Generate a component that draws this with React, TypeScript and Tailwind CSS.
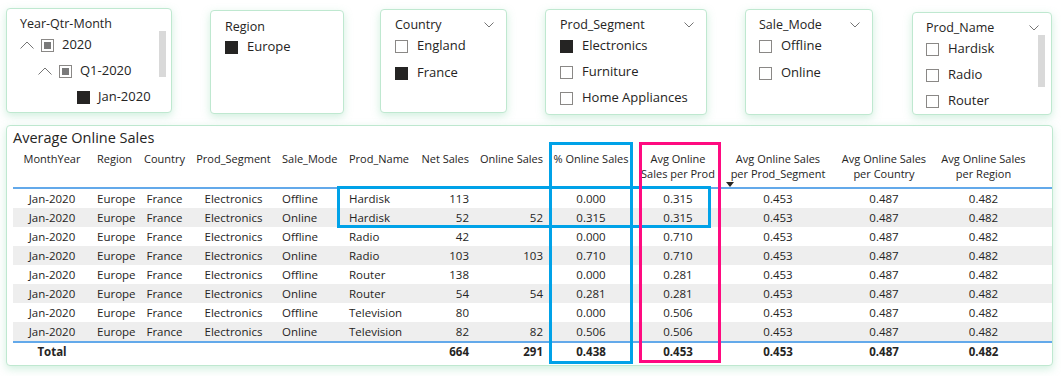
import type { ReactNode } from "react";

const font = { fontFamily: '"Segoe UI", "Open Sans", sans-serif' };

const Chevron = ({ up = false }: { up?: boolean }) =>
  up ? (
    <svg width="14" height="8" viewBox="0 0 14 8" className="shrink-0">
      <polyline points="0.5,7.5 7,1 13.5,7.5" fill="none" stroke="#757575" strokeWidth="1" />
    </svg>
  ) : (
    <svg width="10" height="6" viewBox="0 0 10 6" className="shrink-0">
      <polyline points="0.5,0.5 5,5 9.5,0.5" fill="none" stroke="#757575" strokeWidth="1" />
    </svg>
  );

const Box = ({ checked = false }: { checked?: boolean }) => (
  <span
    className={
      checked
        ? "block h-[13px] w-[13px] shrink-0 bg-[#252423]"
        : "block h-[13px] w-[13px] shrink-0 border border-[#8a8886] bg-white"
    }
  />
);

const Partial = () => (
  <span className="flex h-[13px] w-[13px] shrink-0 items-center justify-center border border-[#8a8886] bg-white">
    <span className="block h-[7px] w-[7px] bg-[#7a7a7a]" />
  </span>
);

type CardProps = {
  title: string;
  className: string;
  dropdown?: boolean;
  children: ReactNode;
};

const Slicer = ({ title, className, dropdown, children }: CardProps) => (
  <div
    className={
      "relative shrink-0 overflow-hidden rounded-[4px] border border-[#bfe8d0] bg-white shadow-[0_3px_8px_rgba(120,210,160,0.35)] " +
      className
    }
  >
    <div className="flex h-[14px] items-center justify-between pr-[12px]">
      <span className="text-[12.5px] font-medium text-[#252423]">{title}</span>
      {dropdown && <Chevron />}
    </div>
    {children}
  </div>
);

const Item = ({ label, checked }: { label: string; checked?: boolean }) => (
  <div className="flex h-[26px] items-center gap-[9px] text-[13px] text-[#252423]">
    <Box checked={checked} />
    <span>{label}</span>
  </div>
);

const Scroll = ({ className }: { className: string }) => (
  <span className={"absolute w-[7px] bg-[#d9d9d9] " + className} />
);

const rows = [
  ["Offline", "Hardisk", "113", "", "0.000", "0.315"],
  ["Online", "Hardisk", "52", "52", "0.315", "0.315"],
  ["Offline", "Radio", "42", "", "0.000", "0.710"],
  ["Online", "Radio", "103", "103", "0.710", "0.710"],
  ["Offline", "Router", "138", "", "0.000", "0.281"],
  ["Online", "Router", "54", "54", "0.281", "0.281"],
  ["Offline", "Television", "80", "", "0.000", "0.506"],
  ["Online", "Television", "82", "82", "0.506", "0.506"],
];

const grid =
  "grid grid-cols-[78px_48px_51px_87px_66px_71px_60px_74px_86px_88px_112px_100px_99px]";

export default function App() {
  return (
    <div className="relative h-[376px] w-[1061px] overflow-hidden bg-white" style={font}>
      {/* slicers */}
      <div className="flex h-[125px] items-start">
        <Slicer title="Year-Qtr-Month" className="ml-[6px] mt-[8px] h-[105px] w-[166px] pl-[13px] pt-[8px]">
          <div className="mt-[1px] flex flex-col text-[13px] text-[#252423]">
            <div className="flex h-[26px] items-center">
              <span className="w-[21px]"><Chevron up /></span>
              <Partial />
              <span className="ml-[8px]">2020</span>
            </div>
            <div className="flex h-[26px] items-center pl-[18px]">
              <span className="w-[21px]"><Chevron up /></span>
              <Partial />
              <span className="ml-[8px]">Q1-2020</span>
            </div>
            <div className="flex h-[26px] items-center pl-[57px]">
              <Box checked />
              <span className="ml-[8px]">Jan-2020</span>
            </div>
          </div>
          <Scroll className="left-[152px] top-[22px] h-[46px]" />
        </Slicer>

        <Slicer title="Region" className="ml-[38px] mt-[10px] h-[104px] w-[134px] pl-[14px] pt-[9px]">
          <div className="mt-0">
            <Item label="Europe" checked />
          </div>
        </Slicer>

        <Slicer title="Country" dropdown className="ml-[36px] mt-[9px] h-[104px] w-[127px] pl-[14px] pt-[8px]">
          <div className="mt-[1px] flex flex-col gap-[1px]">
            <Item label="England" />
            <Item label="France" checked />
          </div>
        </Slicer>

        <Slicer title="Prod_Segment" dropdown className="ml-[38px] mt-[9px] h-[106px] w-[162px] pl-[14px] pt-[8px]">
          <div className="mt-[1px] flex flex-col">
            <Item label="Electronics" checked />
            <Item label="Furniture" />
            <Item label="Home Appliances" />
          </div>
        </Slicer>

        <Slicer title="Sale_Mode" dropdown className="ml-[38px] mt-[9px] h-[106px] w-[128px] pl-[13px] pt-[8px]">
          <div className="mt-[1px] flex flex-col gap-[1px]">
            <Item label="Offline" />
            <Item label="Online" />
          </div>
        </Slicer>

        <Slicer title="Prod_Name" dropdown className="ml-[39px] mt-[12px] h-[103px] w-[140px] pl-[13px] pt-[8px]">
          <div className="mt-[1px] flex flex-col">
            <Item label="Hardisk" />
            <Item label="Radio" />
            <Item label="Router" />
          </div>
          <Scroll className="left-[125px] top-[22px] h-[52px]" />
        </Slicer>
      </div>

      {/* table */}
      <div className="ml-[6px] h-[241px] w-[1047px] rounded-[4px] border border-[#bfe8d0] bg-white pl-[6px] shadow-[0_3px_8px_rgba(120,210,160,0.35)]">
        <div className="pt-[3px] text-[14.5px] leading-[18px] text-[#252423]">Average Online Sales</div>
        <div className={grid + " h-[42px] border-b-2 border-[#63a9ea] pt-[4px] text-[11px] leading-[15px] text-[#252423]"}>
          <div className="text-center">MonthYear</div>
          <div className="pl-[6px]">Region</div>
          <div className="text-center">Country</div>
          <div className="text-center">Prod_Segment</div>
          <div className="pl-[5px]">Sale_Mode</div>
          <div className="pl-[6px]">Prod_Name</div>
          <div className="pr-[5px] text-right">Net Sales</div>
          <div className="pr-[5px] text-right">Online Sales</div>
          <div className="text-center">% Online Sales</div>
          <div className="text-center">Avg Online<br />Sales per Prod</div>
          <div className="relative text-center">
            Avg Online Sales<br />per Prod_Segment
            <span className="absolute left-[4px] top-[31px] h-0 w-0 border-x-[4px] border-t-[5px] border-x-transparent border-t-[#252423]" />
          </div>
          <div className="text-center">Avg Online Sales<br />per Country</div>
          <div className="text-center">Avg Online Sales<br />per Region</div>
        </div>
        {rows.map((r, i) => (
          <div
            key={i}
            className={
              grid +
              " h-[19px] items-center text-[11.5px] text-[#252423] " +
              (i % 2 ? "bg-[#eeeeee]" : "bg-white")
            }
          >
            <div className="text-center">Jan-2020</div>
            <div className="pl-[6px]">Europe</div>
            <div className="text-center">France</div>
            <div className="text-center">Electronics</div>
            <div className="pl-[5px]">{r[0]}</div>
            <div className="pl-[6px]">{r[1]}</div>
            <div className="pr-[5px] text-right">{r[2]}</div>
            <div className="pr-[5px] text-right">{r[3]}</div>
            <div className="text-center">{r[4]}</div>
            <div className="text-center">{r[5]}</div>
            <div className="text-center">0.453</div>
            <div className="text-center">0.487</div>
            <div className="text-center">0.482</div>
          </div>
        ))}
        <div className={grid + " h-[20px] items-center border-t-2 border-[#63a9ea] text-[11.5px] font-bold text-[#252423]"}>
          <div className="text-center">Total</div>
          <div />
          <div />
          <div />
          <div />
          <div />
          <div className="pr-[5px] text-right">664</div>
          <div className="pr-[5px] text-right">291</div>
          <div className="text-center">0.438</div>
          <div className="text-center">0.453</div>
          <div className="text-center">0.453</div>
          <div className="text-center">0.487</div>
          <div className="text-center">0.482</div>
        </div>
      </div>

      {/* annotation boxes */}
      <div className="absolute left-[549px] top-[142px] h-[222px] w-[84px] border-[3px] border-[#00a2e8]" />
      <div className="absolute left-[337px] top-[186px] h-[42px] w-[374px] border-[3px] border-[#00a2e8]" />
      <div className="absolute left-[639px] top-[142px] h-[221px] w-[82px] border-[3px] border-[#ff0a80]" />
    </div>
  );
}
